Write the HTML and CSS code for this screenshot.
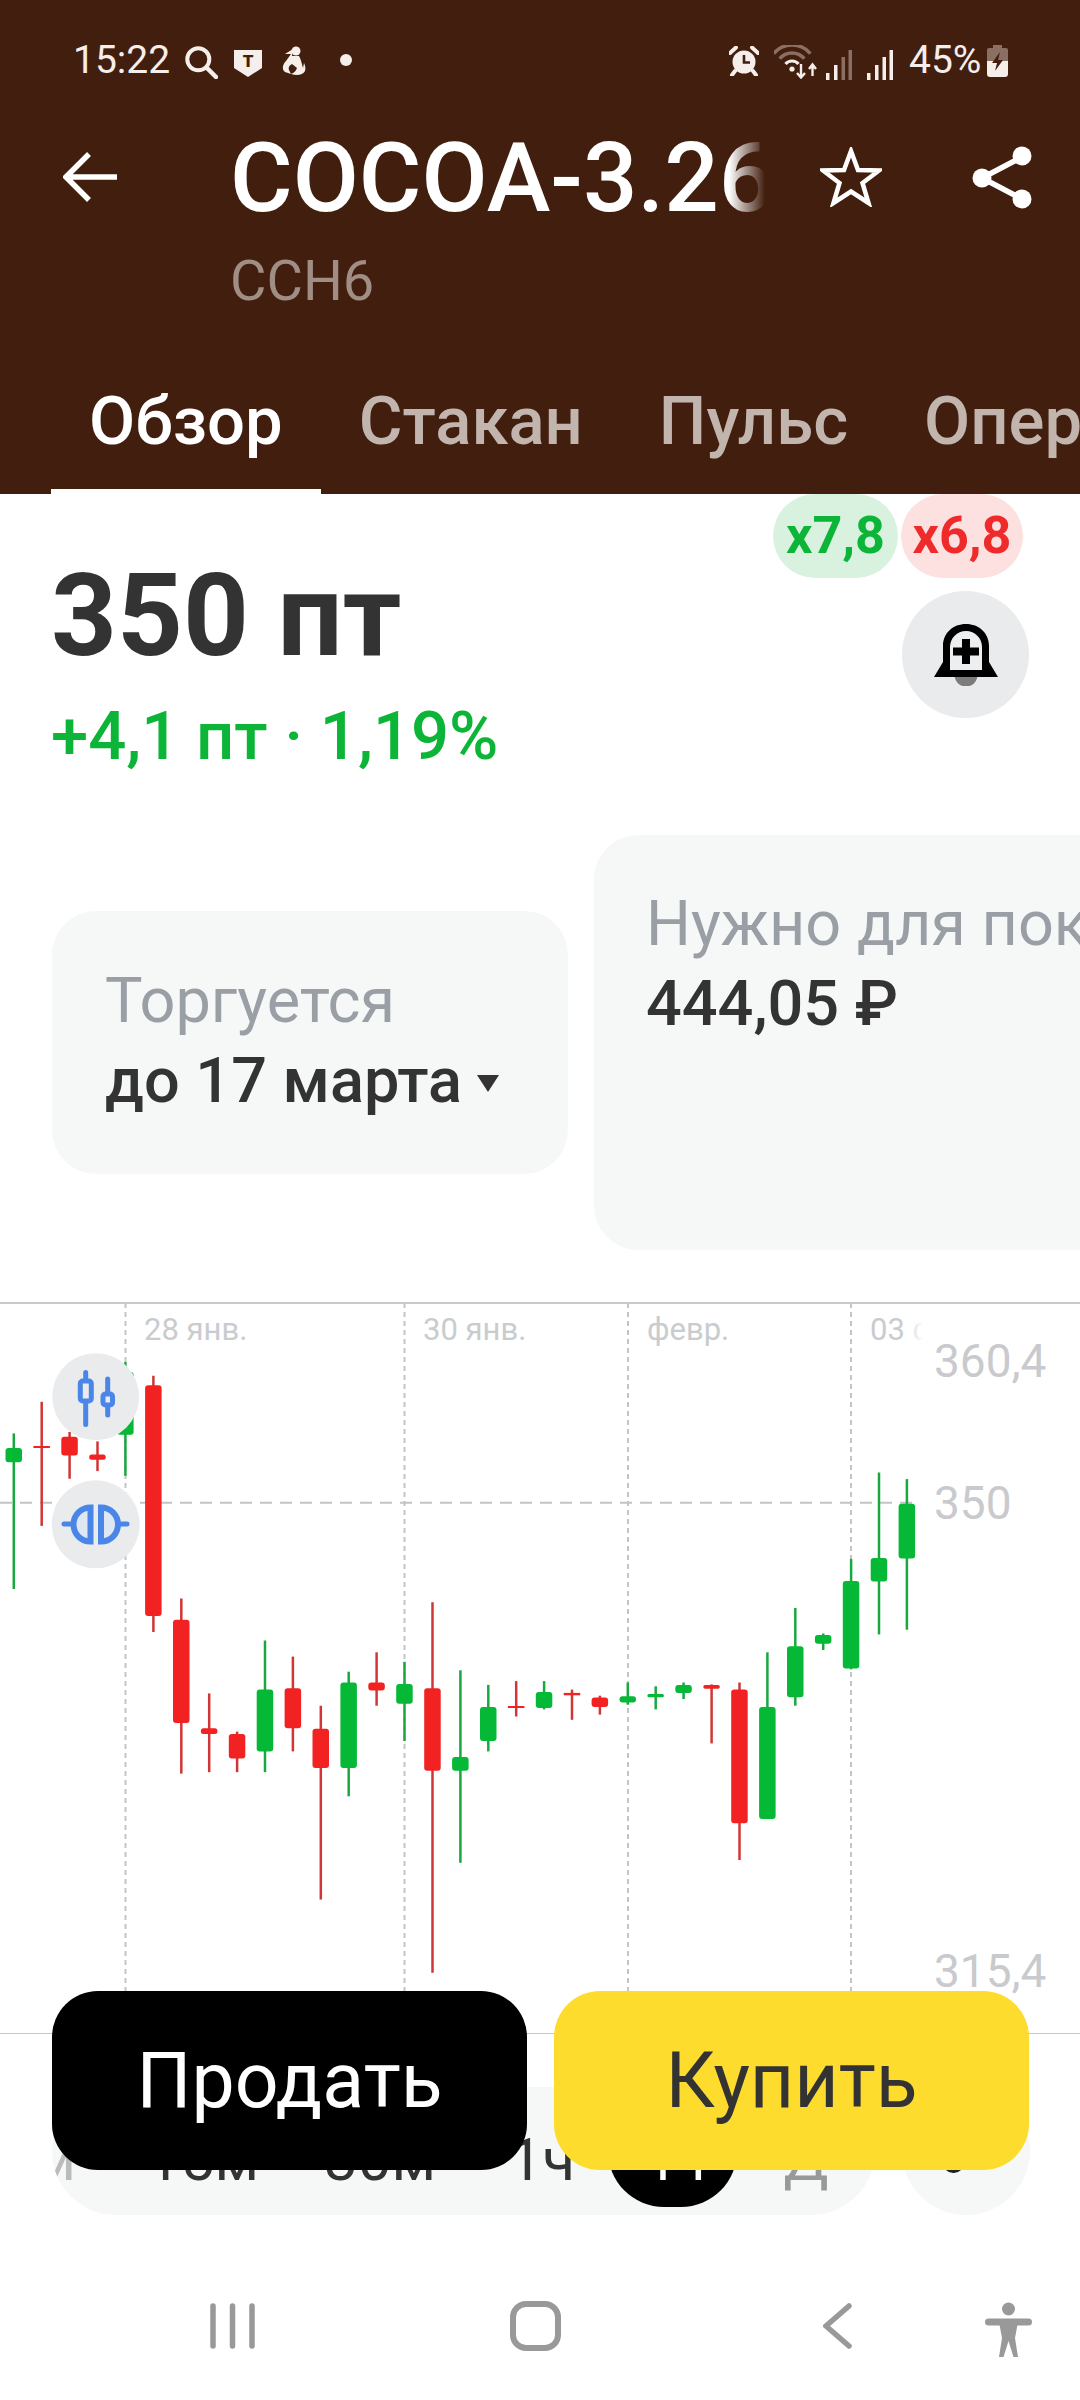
FILE: index.html
```html
<!DOCTYPE html>
<html lang="ru">
<head>
    <meta charset="UTF-8">
    <meta name="viewport" content="width=device-width, initial-scale=1.0">
    <title>COCOA-3.26</title>
    <link rel="stylesheet" href="styles.css">
</head>
<body>
    <header class="header">
        <!-- Status bar -->
        <div class="status">
            <span class="time">15:22</span>
            <svg class="ico-search" width="34" height="36" viewBox="0 0 34 36"><circle cx="14.3" cy="16.3" r="11" fill="none" stroke="#f5eeea" stroke-width="4"/><path d="M22.5 24.5L32 34" stroke="#f5eeea" stroke-width="4.5" stroke-linecap="round"/></svg>
            <svg class="ico-shield" width="28" height="28" viewBox="0 0 28 28"><path d="M0 1H28V19L14 28L0 19Z" fill="#f5eeea"/><text x="14" y="18" class="shield-t">T</text></svg>
            <svg class="ico-person" width="24" height="30" viewBox="0 0 24 30"><circle cx="14" cy="5" r="4.5" fill="#f5eeea"/><path d="M11 3L3 8L9 8L4 15C0 19 0 24 3 26L9 28L7 24C6 21 8 19 10 18L15 22C14 25 12 27 9 28C15 30 21 29 23 25C24 22 23 19 22 17L21 22C20 19 19 13 17 10L10 10Z" fill="#f5eeea"/></svg>
            <span class="dot"></span>
            <span class="spacer"></span>
            <svg class="ico-alarm" width="30" height="30" viewBox="0 0 30 30"><circle cx="15" cy="16" r="11.5" fill="#f5eeea"/><path d="M1 7L7 1.5M29 7L23 1.5M6 25L3 29M24 25L27 29" stroke="#f5eeea" stroke-width="4" stroke-linecap="round"/><path d="M15 9V16.5H21" fill="none" stroke="#421e0e" stroke-width="2.6"/></svg>
            <svg class="ico-wifi" width="44" height="34" viewBox="0 0 44 34" fill="none"><path d="M-.4 8.6A24 24 0 0 1 36.4 8.6" stroke="#8a6f62" stroke-width="3.5"/><path d="M5.7 13.7A16 16 0 0 1 30.3 13.7" stroke="#8a6f62" stroke-width="3.5"/><path d="M11.5 19A8.5 8.5 0 0 1 24.5 19" stroke="#f5eeea" stroke-width="3.2"/><circle cx="18" cy="24" r="2.6" fill="#f5eeea"/><path d="M27 19V32M23 28L27 32.5L31 28M38.500 31V20M35 24L38.500 19.500L42 24" stroke="#f5eeea" stroke-width="2.400"/></svg>
            <svg class="ico-signal" width="26" height="30" viewBox="0 0 26 30"><rect x="0" y="23" width="3.5" height="7" fill="#f5eeea"/><rect x="8" y="15" width="3.5" height="15" fill="#f5eeea"/><rect x="15.500" y="7" width="3.500" height="23" fill="#8a6f62"/><rect x="22.500" y="0" width="3.500" height="30" fill="#8a6f62"/></svg>
            <svg class="ico-signal second" width="26" height="30" viewBox="0 0 26 30"><rect x="0" y="23" width="3.5" height="7" fill="#f5eeea"/><rect x="8" y="15" width="3.5" height="15" fill="#f5eeea"/><rect x="15.500" y="7" width="3.500" height="23" fill="#f5eeea"/><rect x="22.500" y="0" width="3.500" height="30" fill="#f5eeea"/></svg>
            <span class="battery-text">45%</span>
            <svg class="ico-battery" width="21" height="32" viewBox="0 0 21 32"><path d="M6 0H15V3H19Q21 3 21 5V16H0V5Q0 3 2 3H6Z" fill="#8a6f62"/><path d="M0 16H21V29Q21 32 18 32H3Q0 32 0 29Z" fill="#f5eeea"/><path d="M13 7L5 18H10L8 26L16 15H11Z" fill="#421e0e"/></svg>
        </div>

        <!-- Title -->
        <div class="titlebar">
            <svg class="ico-back" width="54" height="50" viewBox="0 0 54 50" fill="none"><path d="M3 25H54M26 2L3 25L26 48" stroke="#fff" stroke-width="5.500"/></svg>
            <div class="title-col">
                <div class="title">COCOA-3.26</div>
                <div class="ticker">CCH6</div>
            </div>
            <svg class="ico-star" width="62" height="60" viewBox="0 0 62 60" fill="none"><path d="M31 4L38 23L59 23.500L42.500 36L48.500 56L31 44.500L13.500 56L19.500 36L3 23.500L24 23Z" stroke="#fff" stroke-width="4.500"/></svg>
            <svg class="ico-share" width="60" height="66" viewBox="0 0 60 66" fill="none"><path d="M50 12L10 33L50 54" stroke="#fff" stroke-width="5.500"/><circle cx="50" cy="11" r="9.500" fill="#fff"/><circle cx="10" cy="33" r="9.500" fill="#fff"/><circle cx="50" cy="54" r="9.500" fill="#fff"/></svg>
        </div>

        <!-- Tabs -->
        <nav class="tabs">
            <a class="tab active">Обзор</a>
            <a class="tab">Стакан</a>
            <a class="tab">Пульс</a>
            <a class="tab">Операции</a>
        </nav>
    </header>

    <section class="quote">
        <div class="prices">
            <div class="price">350 пт</div>
            <div class="change">+4,1 пт · 1,19%</div>
        </div>
        <div class="quote-side">
            <div class="badges">
                <span class="badge long">x7,8</span>
                <span class="badge short">x6,8</span>
            </div>
            <div class="bell">
                <svg width="64" height="62" viewBox="0 0 64 62"><circle cx="32" cy="51" r="11.500" fill="#7c7c7c"/><path d="M32 0C19 0 9 9 9 22V38L0 53H64L55 38V22C55 9 45 0 32 0Z" fill="#000"/><path d="M32 7C23 7 16 14 16 23V46H48V23C48 14 41 7 32 7Z" fill="#eceef0"/><path d="M28 15H36V23.500H45V31.500H36V40H28V31.500H19V23.500H28Z" fill="#000"/></svg>
            </div>
        </div>
    </section>

    <section class="cards">
        <div class="card card-small">
            <div class="card-label">Торгуется</div>
            <div class="card-value">до 17 марта <span class="caret"></span></div>
        </div>
        <div class="card card-big">
            <div class="card-label">Нужно для покупки</div>
            <div class="card-value">444,05 ₽</div>
        </div>
    </section>

    <!-- Chart: coordinates below are page coordinates -->
    <section class="chart">
        <svg width="1080" height="732" viewBox="0 1302 1080 732">
            <defs>
                <linearGradient id="fade"><stop offset="0" stop-color="#fff" stop-opacity="0"/><stop offset="1" stop-color="#fff"/></linearGradient>
            </defs>
            <path class="frame" d="M0 1303H1080M0 2034H1080"/>
            <path class="grid-v" d="M125.500 1303V2033M404.500 1303V2033M628 1303V2033M851 1303V2033"/>
            <path class="grid-h" d="M0 1502.700H920"/>

            <text class="date" x="144" y="1340">28 янв.</text>
            <text class="date" x="423" y="1340">30 янв.</text>
            <text class="date" x="647" y="1340">февр.</text>
            <text class="date" x="870" y="1340">03 ф</text>
            <rect x="905" y="1310" width="18" height="40" fill="url(#fade)"/>
            <rect x="923" y="1310" width="157" height="40" fill="#fff"/>
            <text class="axis" x="934" y="1377">360,4</text>
            <text class="axis" x="934" y="1519">350</text>
            <text class="axis" x="934" y="1987">315,4</text>

            <g class="up"><line x1="13.800" x2="13.800" y1="1433.400" y2="1589"/><rect x="5.500" y="1448" width="16.500" height="14.200" rx="3"/></g>
            <g class="down"><line x1="41.700" x2="41.700" y1="1401.800" y2="1525.900"/><rect x="33.400" y="1446" width="16.500" height="2"/></g>
            <g class="down"><line x1="69.600" x2="69.600" y1="1432" y2="1478.700"/><rect x="61.300" y="1436.700" width="16.500" height="18.800" rx="3"/></g>
            <g class="down"><line x1="97.500" x2="97.500" y1="1441.400" y2="1471.100"/><rect x="89.200" y="1454.600" width="16.500" height="5.200" rx="2.500"/></g>
            <g class="up"><line x1="125.400" x2="125.400" y1="1362" y2="1475.800"/><rect x="117.100" y="1372" width="16.500" height="62.800" rx="3"/></g>
            <g class="down"><line x1="153.400" x2="153.400" y1="1375.800" y2="1632"/><rect x="145.100" y="1385.200" width="16.500" height="230.800" rx="3"/></g>
            <g class="down"><line x1="181.300" x2="181.300" y1="1598.500" y2="1773.600"/><rect x="173" y="1619.800" width="16.500" height="103.300" rx="3"/></g>
            <g class="down"><line x1="209.200" x2="209.200" y1="1693.400" y2="1772.200"/><rect x="200.900" y="1728.300" width="16.500" height="5.700" rx="2.500"/></g>
            <g class="down"><line x1="237.100" x2="237.100" y1="1731.600" y2="1772.200"/><rect x="228.800" y="1734" width="16.500" height="24.500" rx="3"/></g>
            <g class="up"><line x1="265" x2="265" y1="1640.500" y2="1772.200"/><rect x="256.700" y="1689.600" width="16.500" height="61.800" rx="3"/></g>
            <g class="down"><line x1="292.900" x2="292.900" y1="1656.600" y2="1751.400"/><rect x="284.600" y="1688.200" width="16.500" height="40.100" rx="3"/></g>
            <g class="down"><line x1="320.800" x2="320.800" y1="1705.700" y2="1899.600"/><rect x="312.500" y="1728.800" width="16.500" height="39.100" rx="3"/></g>
            <g class="up"><line x1="348.700" x2="348.700" y1="1671.700" y2="1796.300"/><rect x="340.400" y="1682.500" width="16.500" height="85.400" rx="3"/></g>
            <g class="down"><line x1="376.600" x2="376.600" y1="1652.300" y2="1705.700"/><rect x="368.300" y="1682.500" width="16.500" height="8" rx="3"/></g>
            <g class="up"><line x1="404.500" x2="404.500" y1="1661.800" y2="1741"/><rect x="396.200" y="1684" width="16.500" height="19.800" rx="3"/></g>
            <g class="down"><line x1="432.500" x2="432.500" y1="1602.300" y2="1972.800"/><rect x="424.200" y="1688.200" width="16.500" height="82.600" rx="3"/></g>
            <g class="up"><line x1="460.400" x2="460.400" y1="1670.300" y2="1862.800"/><rect x="452.100" y="1757.100" width="16.500" height="13.700" rx="3"/></g>
            <g class="up"><line x1="488.300" x2="488.300" y1="1684.900" y2="1751.400"/><rect x="480" y="1707.100" width="16.500" height="33.900" rx="3"/></g>
            <g class="down"><line x1="516.200" x2="516.200" y1="1681.100" y2="1716.500"/><rect x="507.900" y="1706" width="16.500" height="2"/></g>
            <g class="up"><line x1="544.100" x2="544.100" y1="1681.100" y2="1709.400"/><rect x="535.800" y="1692" width="16.500" height="16" rx="3"/></g>
            <g class="down"><line x1="572" x2="572" y1="1689.600" y2="1719.800"/><rect x="563.700" y="1692.900" width="16.500" height="2.400"/></g>
            <g class="down"><line x1="599.900" x2="599.900" y1="1695.700" y2="1714.600"/><rect x="591.600" y="1697.600" width="16.500" height="9.500" rx="3"/></g>
            <g class="up"><line x1="627.800" x2="627.800" y1="1682.500" y2="1704.700"/><rect x="619.500" y="1696.200" width="16.500" height="6.200" rx="3"/></g>
            <g class="up"><line x1="655.700" x2="655.700" y1="1686.300" y2="1709.400"/><rect x="647.400" y="1693.900" width="16.500" height="3.300" rx="1.500"/></g>
            <g class="up"><line x1="683.600" x2="683.600" y1="1682.500" y2="1699"/><rect x="675.300" y="1684.900" width="16.500" height="8" rx="3"/></g>
            <g class="down"><line x1="711.600" x2="711.600" y1="1684.400" y2="1743.400"/><rect x="703.300" y="1684.900" width="16.500" height="3.800" rx="1.800"/></g>
            <g class="down"><line x1="739.500" x2="739.500" y1="1682.500" y2="1860"/><rect x="731.200" y="1689.600" width="16.500" height="133.600" rx="3"/></g>
            <g class="up"><line x1="767.400" x2="767.400" y1="1652.300" y2="1818.900"/><rect x="759.100" y="1707.100" width="16.500" height="111.800" rx="3"/></g>
            <g class="up"><line x1="795.300" x2="795.300" y1="1608" y2="1705.700"/><rect x="787" y="1646.200" width="16.500" height="51" rx="3"/></g>
            <g class="up"><line x1="823.200" x2="823.200" y1="1633.500" y2="1650"/><rect x="814.900" y="1634.900" width="16.500" height="8.900" rx="3"/></g>
            <g class="up"><line x1="851.100" x2="851.100" y1="1558.900" y2="1669.300"/><rect x="842.800" y="1581.100" width="16.500" height="87.300" rx="3"/></g>
            <g class="up"><line x1="879" x2="879" y1="1472.500" y2="1634.400"/><rect x="870.700" y="1558" width="16.500" height="23.500" rx="3"/></g>
            <g class="up"><line x1="906.900" x2="906.900" y1="1479.100" y2="1629.700"/><rect x="898.600" y="1503.700" width="16.500" height="54.700" rx="3"/></g>

            <circle class="chart-btn" cx="95.700" cy="1396.700" r="43.500"/>
            <g class="chart-ico">
                <path d="M85.700 1372.500V1379M85.700 1403V1424.500M107.700 1379V1392M107.700 1407V1415"/>
                <rect x="80.300" y="1381" width="11" height="20" rx="2.500"/>
                <rect x="103" y="1394" width="9.500" height="11" rx="2.500"/>
            </g>
            <circle class="chart-btn" cx="95.700" cy="1524.300" r="44"/>
            <g class="chart-ico">
                <path d="M64 1524H76M115 1524H127"/>
                <path class="half" d="M90.500 1507.500A17 17 0 0 0 90.500 1541.500Z"/>
                <path class="half" d="M101 1507.500A17 17 0 0 1 101 1541.500Z"/>
            </g>
        </svg>
    </section>

    <!-- Timeframes, mostly covered by the trade buttons -->
    <section class="frames">
        <div class="frame-list">
            <span class="tf tf-first">1м</span>
            <span class="tf tf-15">15м</span>
            <span class="tf tf-30">30м</span>
            <span class="tf tf-1h">1ч</span>
            <span class="tf tf-4h">4ч</span>
            <span class="tf tf-day">Д</span>
        </div>
        <div class="frame-more"><span class="frame-more-icon"></span></div>
    </section>

    <div class="trade">
        <button class="btn sell">Продать</button>
        <button class="btn buy">Купить</button>
    </div>

    <nav class="sysnav">
        <svg class="nav-recent" width="45" height="46" viewBox="0 0 45 46"><path d="M3 3V43M22.500 3V43M42 3V43" stroke="#999" stroke-width="5.500" stroke-linecap="round"/></svg>
        <svg class="nav-home" width="51" height="50" viewBox="0 0 51 50"><rect x="3" y="3" width="45" height="44" rx="13" fill="none" stroke="#999" stroke-width="6"/></svg>
        <svg class="nav-back" width="29" height="46" viewBox="0 0 29 46"><path d="M26 3L3 23L26 43" fill="none" stroke="#999" stroke-width="5.500" stroke-linecap="round"/></svg>
        <svg class="nav-access" width="47" height="56" viewBox="0 0 47 56"><circle cx="23.500" cy="7" r="6.500" fill="#999"/><path d="M3.500 20H43.500" stroke="#999" stroke-width="7" stroke-linecap="round"/><path d="M14 20H33L30 36L33 55H28.500L23.500 39L18.500 55H14L17 36Z" fill="#999"/></svg>
    </nav>
</body>
</html>
```

FILE: styles.css
```css
* {
    box-sizing: border-box;
}

body {
    font-family: Roboto, "Noto Sans", sans-serif;
    margin: 0;
    width: 1080px;
    height: 2400px;
    position: relative;
    overflow: hidden;
    background: #fff;
    color: #333;
}

/* header */
.header {
    background: #421e0e;
    height: 494px;
    color: #fff;
}

.status {
    height: 120px;
    display: flex;
    align-items: center;
    padding: 0 72px 0 73px;
    color: #f5eeea;
    font-size: 39px;
}

.time {
    width: 95px;
}

.ico-search {
    margin-left: 16px;
    margin-top: 1px;
}

.ico-shield {
    margin-left: 16px;
    margin-top: 6px;
}

.shield-t {
    font-size: 17px;
    font-weight: 900;
    text-anchor: middle;
    fill: #421e0e;
}

.ico-person {
    margin-left: 20px;
    margin-top: 2px;
}

.dot {
    width: 12px;
    height: 12px;
    margin-left: 34px;
    border-radius: 50%;
    background: #f5eeea;
}

.spacer {
    flex: 1;
}

.ico-alarm {
    margin-top: 2px;
}

.ico-wifi {
    margin-left: 15px;
    margin-top: 4px;
}

.ico-signal {
    margin-left: 8px;
    margin-top: 10px;
}

.ico-signal.second {
    margin-left: 15px;
}

.battery-text {
    margin-left: 16px;
    width: 78px;
}

.ico-battery {
    margin-top: 2px;
}

.titlebar {
    height: 215px;
    position: relative;
    display: flex;
    align-items: flex-start;
    padding-left: 63px;
}

.ico-back {
    margin-top: 32px;
}

.title-col {
    margin-left: 113px;
    width: 540px;
}

.title {
    position: relative;
    width: 535px;
    height: 116px;
    overflow: hidden;
    white-space: nowrap;
    font-size: 96px;
    font-weight: 500;
    line-height: 116px;
}

.title::after {
    content: "";
    position: absolute;
    top: 0;
    right: 0;
    width: 36px;
    height: 100%;
    background: linear-gradient(90deg, rgba(66, 30, 14, 0), #421e0e);
}

.ticker {
    margin-top: 11px;
    font-size: 56px;
    line-height: 68px;
    color: #a08d84;
}

.ico-star {
    margin-left: 50px;
    margin-top: 27px;
}

.ico-share {
    margin-left: 90px;
    margin-top: 25px;
}

.tabs {
    display: flex;
    height: 159px;
    padding-left: 51px;
    overflow: hidden;
    white-space: nowrap;
}

.tab {
    padding: 49px 38px 0;
    font-size: 67px;
    font-weight: 500;
    line-height: 74px;
    color: #c1b5ae;
}

.tab.active {
    color: #fff;
    border-bottom: 5px solid #fff;
}

/* price block */
.quote {
    height: 341px;
    display: flex;
    justify-content: space-between;
    padding: 0 51px 0 51px;
}

.prices {
    padding-top: 57px;
}

.price {
    font-size: 115px;
    font-weight: 700;
    line-height: 130px;
}

.change {
    margin-top: 15px;
    font-size: 67px;
    font-weight: 500;
    line-height: 80px;
    color: #0cb537;
}

.quote-side {
    display: flex;
    flex-direction: column;
    align-items: flex-end;
}

.badges {
    display: flex;
    gap: 3px;
    margin-right: 6px;
}

.badge {
    height: 84px;
    border-radius: 42px;
    font-size: 52px;
    font-weight: 700;
    line-height: 84px;
    text-align: center;
}

.badge.long {
    width: 125px;
    background: #d9f2df;
    color: #0cb537;
}

.badge.short {
    width: 122px;
    background: #fde0e0;
    color: #ee2a2a;
}

.bell {
    width: 127px;
    height: 127px;
    margin-top: 13px;
    border-radius: 50%;
    background: #e9ebed;
    display: flex;
    align-items: center;
    justify-content: center;
}

/* info cards */
.cards {
    height: 415px;
    display: flex;
    align-items: center;
    gap: 26px;
    padding-left: 52px;
    overflow: hidden;
}

.card {
    flex-shrink: 0;
    background: #f6f8f8;
    border-radius: 44px;
}

.card-small {
    width: 516px;
    height: 263px;
    padding: 52px 0 0 53px;
}

.card-big {
    width: 640px;
    height: 415px;
    padding: 51px 0 0 52px;
}

.card-label {
    font-size: 63px;
    line-height: 76px;
    color: #9a9fa6;
    white-space: nowrap;
}

.card-value {
    margin-top: 4px;
    font-size: 63px;
    font-weight: 500;
    line-height: 76px;
    color: #333;
}

.caret {
    display: inline-block;
    margin-left: -1px;
    vertical-align: 10px;
    border-left: 11px solid transparent;
    border-right: 11px solid transparent;
    border-top: 17px solid #333;
}

/* chart */
.chart {
    margin-top: 52px;
    height: 732px;
}

.chart svg {
    display: block;
}

.frame {
    stroke: #c9c9c9;
    stroke-width: 2;
    fill: none;
}

.grid-v {
    stroke: #c4c4c4;
    stroke-width: 2;
    stroke-dasharray: 5 4;
    fill: none;
}

.grid-h {
    stroke: #c4c4c4;
    stroke-width: 2;
    stroke-dasharray: 12 8;
    fill: none;
}

.date {
    font-size: 31px;
    fill: #c9cccf;
}

.axis {
    font-size: 46px;
    fill: #c8cacd;
}

.up line {
    stroke: #18a83f;
    stroke-width: 2.5;
}

.up rect {
    fill: #05b835;
}

.down line {
    stroke: #d03636;
    stroke-width: 2.5;
}

.down rect {
    fill: #f22222;
}

.chart-btn {
    fill: #e9ebed;
}

.chart-ico path,
.chart-ico rect {
    fill: none;
    stroke: #4a86e8;
    stroke-width: 5;
    stroke-linecap: round;
}

.chart-ico .half {
    fill: #dfe7f3;
    stroke-width: 6;
    stroke-linecap: butt;
}

/* timeframes */
.frames {
    margin-top: 53px;
    height: 128px;
    padding: 0 50px 0 52px;
    display: flex;
    justify-content: space-between;
}

.frame-list {
    width: 823px;
    height: 128px;
    border-radius: 64px;
    background: #f6f8f8;
    display: grid;
    grid-template-columns: 76px 150px 204px 126px 129px 138px;
    overflow: hidden;
}

.tf {
    padding-top: 44px;
    font-size: 60px;
    line-height: 58px;
    text-align: center;
}

.tf-first {
    color: #bbb;
    direction: rtl;
    padding-right: 52px;
    white-space: nowrap;
}

.tf-1h {
    padding-right: 6px;
}

.tf-4h {
    height: 112px;
    margin-top: 8px;
    padding-top: 36px;
    border-radius: 56px;
    background: #000;
    color: #fff;
}

.tf-day {
    color: #999;
}

.frame-more {
    width: 128px;
    height: 128px;
    border-radius: 50%;
    background: #f6f8f8;
    padding: 50px 0 0 41px;
}

.frame-more-icon {
    display: block;
    width: 21px;
    height: 36px;
    border-radius: 0 0 10px 10px;
    background: #222;
}

/* buy and sell lie over the chart */
.trade {
    position: absolute;
    top: 1991px;
    left: 52px;
    display: flex;
    gap: 27px;
}

.btn {
    width: 475px;
    height: 179px;
    border: none;
    border-radius: 46px;
    font-family: Roboto, sans-serif;
    font-size: 77px;
}

.btn.sell {
    background: #000;
    color: #fff;
}

.btn.buy {
    background: #fddc2e;
    color: #333;
}

/* system navigation */
.sysnav {
    display: flex;
    align-items: flex-start;
    padding-top: 86px;
}

.nav-recent {
    margin: 2px 0 0 210px;
}

.nav-home {
    margin-left: 255px;
}

.nav-back {
    margin: 2px 0 0 262px;
}

.nav-access {
    margin: 1px 0 0 133px;
}
```
